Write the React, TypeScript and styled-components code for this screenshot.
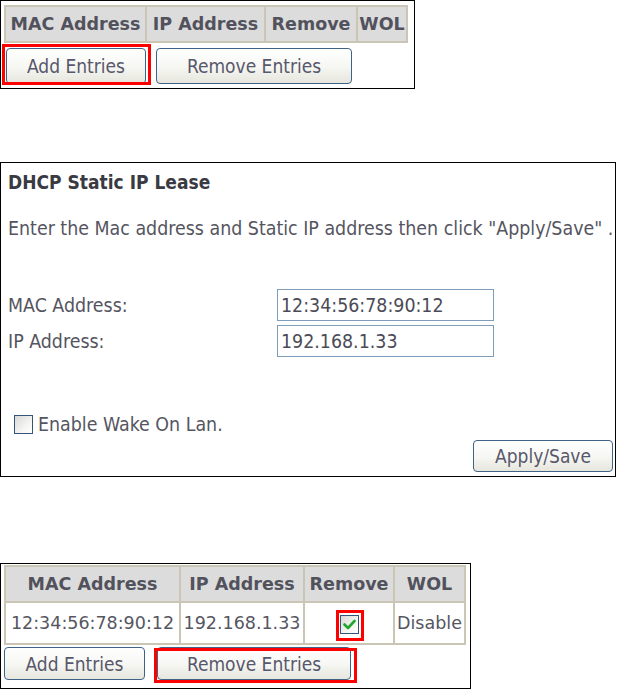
import React from "react";
import styled, { createGlobalStyle } from "styled-components";

const Global = createGlobalStyle`
  html, body { margin: 0; padding: 0; background: #fff; }
  body { width: 617px; height: 689px; overflow: hidden; font-family: "DejaVu Sans", Verdana, sans-serif; }
`;

const FORM_FONT = `"DejaVu Sans Condensed", "DejaVu Sans", Tahoma, sans-serif`;

const Page = styled.div`
  display: flex;
  flex-direction: column;
  align-items: flex-start;
`;

const Panel = styled.section<{ $w: number; $h: number; $mt: number; $pad: string }>`
  box-sizing: border-box;
  width: ${(p) => p.$w}px;
  height: ${(p) => p.$h}px;
  margin-top: ${(p) => p.$mt}px;
  padding: ${(p) => p.$pad};
  border: 1px solid #000;
  display: flex;
  flex-direction: column;
  align-items: flex-start;
`;

const Table = styled.table<{ $w: number }>`
  box-sizing: border-box;
  width: ${(p) => p.$w}px;
  table-layout: fixed;
  border-collapse: separate;
  border-spacing: 0;
  border: 1px solid #cac5b4;
  font-family: "DejaVu Sans", Verdana, sans-serif;
  font-size: 17.5px;
  color: #52525c;
`;

const Th = styled.th<{ $w: number }>`
  box-sizing: border-box;
  width: ${(p) => p.$w}px;
  height: 36px;
  padding: 0;
  background: #dcdcdc;
  border: 1px solid #cac5b4;
  font-weight: bold;
  white-space: nowrap;
  text-align: center;
`;

const Td = styled.td<{ $pt?: number }>`
  box-sizing: border-box;
  height: 42px;
  padding: ${(p) => p.$pt ?? 0}px 0 0;
  background: #fff;
  border: 1px solid #cac5b4;
  white-space: nowrap;
  text-align: center;
  font-weight: normal;
  color: #56565f;
`;

const ButtonRow = styled.div<{ $mt: number; $ml: number; $gap: number }>`
  display: flex;
  gap: ${(p) => p.$gap}px;
  margin-top: ${(p) => p.$mt}px;
  margin-left: ${(p) => p.$ml}px;
`;

const Button = styled.button<{ $w: number; $h: number }>`
  box-sizing: border-box;
  width: ${(p) => p.$w}px;
  height: ${(p) => p.$h}px;
  padding: 0;
  border: 1px solid #3f6287;
  border-radius: 4px;
  background: linear-gradient(#ffffff 0%, #f6f6f2 55%, #e6e6de 100%);
  font-family: ${FORM_FONT};
  font-size: 19px;
  color: #58586c;
  cursor: pointer;
`;

const Highlight = styled.span<{ $inset: string }>`
  position: relative;
  display: inline-flex;
  &::after {
    content: "";
    position: absolute;
    inset: ${(p) => p.$inset};
    border: 3px solid #ff0000;
    pointer-events: none;
  }
`;

const Title = styled.h2`
  margin: 0;
  font-family: ${FORM_FONT};
  font-size: 19px;
  line-height: 22px;
  font-weight: bold;
  color: #3a3a42;
`;

const Desc = styled.p`
  margin: 25px 0 0;
  font-family: ${FORM_FONT};
  font-size: 19.4px;
  line-height: 22px;
  color: #55555f;
  white-space: nowrap;
`;

const FormGrid = styled.div`
  display: grid;
  grid-template-columns: 269px 217px;
  row-gap: 4px;
  align-items: center;
  margin-top: 49px;
  font-family: ${FORM_FONT};
  font-size: 19.4px;
  color: #55555f;
`;

const Label = styled.label``;

const TextInput = styled.input`
  box-sizing: border-box;
  width: 217px;
  height: 32px;
  padding: 0 3px;
  border: 1px solid #7f9db9;
  font-family: ${FORM_FONT};
  font-size: 19.4px;
  color: #4b4b57;
  background: #fff;
  outline: none;
`;

const CheckRow = styled.label`
  display: flex;
  align-items: center;
  gap: 5px;
  margin: 56px 0 0 6px;
  font-family: ${FORM_FONT};
  font-size: 19.4px;
  color: #55555f;
`;

const Box = styled.span`
  box-sizing: border-box;
  width: 19px;
  height: 19px;
  border: 1px solid #34557a;
  background: linear-gradient(135deg, #d8d8d4 0%, #f4f4f2 60%, #ffffff 100%);
  display: inline-flex;
  align-items: center;
  justify-content: center;
`;

const Actions = styled.div`
  align-self: stretch;
  display: flex;
  justify-content: flex-end;
  margin-top: 4px;
`;

const Check = ({ checked }: { checked?: boolean }) => (
  <Box>
    {checked && (
      <svg width="13" height="11" viewBox="0 0 13 11">
        <path d="M1.5 5.5 L5 9 L11.5 2" fill="none" stroke="#22a632" strokeWidth="2.6" strokeLinecap="round" strokeLinejoin="round" />
      </svg>
    )}
  </Box>
);

const HeaderRow = ({ widths }: { widths: number[] }) => (
  <tr>
    <Th $w={widths[0]}>MAC Address</Th>
    <Th $w={widths[1]}>IP Address</Th>
    <Th $w={widths[2]}>Remove</Th>
    <Th $w={widths[3]}>WOL</Th>
  </tr>
);

export default function App() {
  return (
    <>
      <Global />
      <Page>
        <Panel $w={415} $h={89} $mt={0} $pad="4px 0 0 3px">
          <Table $w={404}>
            <thead>
              <HeaderRow widths={[141, 119, 92, 50]} />
            </thead>
          </Table>
          <ButtonRow $mt={5} $ml={2} $gap={10}>
            <Highlight $inset="-4px -5px -1px -4px">
              <Button $w={140} $h={36}>Add Entries</Button>
            </Highlight>
            <Button $w={196} $h={36}>Remove Entries</Button>
          </ButtonRow>
        </Panel>

        <Panel $w={616} $h={315} $mt={73} $pad="8px 2px 4px 7px">
          <Title>DHCP Static IP Lease</Title>
          <Desc>Enter the Mac address and Static IP address then click "Apply/Save" .</Desc>
          <FormGrid>
            <Label>MAC Address:</Label>
            <TextInput defaultValue="12:34:56:78:90:12" />
            <Label>IP Address:</Label>
            <TextInput defaultValue="192.168.1.33" />
          </FormGrid>
          <CheckRow>
            <Check />
            Enable Wake On Lan.
          </CheckRow>
          <Actions>
            <Button $w={140} $h={32}>Apply/Save</Button>
          </Actions>
        </Panel>

        <Panel $w={471} $h={126} $mt={86} $pad="1px 0 0 3px">
          <Table $w={462}>
            <thead>
              <HeaderRow widths={[175, 124, 90, 71]} />
            </thead>
            <tbody>
              <tr>
                <Td>12:34:56:78:90:12</Td>
                <Td>192.168.1.33</Td>
                <Td $pt={2}>
                  <Highlight $inset="-5px -5px -7px -4px">
                    <Check checked />
                  </Highlight>
                </Td>
                <Td>Disable</Td>
              </tr>
            </tbody>
          </Table>
          <ButtonRow $mt={2} $ml={0} $gap={12}>
            <Button $w={141} $h={33}>Add Entries</Button>
            <Highlight $inset="1px -6px -3px -3px">
              <Button $w={194} $h={33}>Remove Entries</Button>
            </Highlight>
          </ButtonRow>
        </Panel>
      </Page>
    </>
  );
}
